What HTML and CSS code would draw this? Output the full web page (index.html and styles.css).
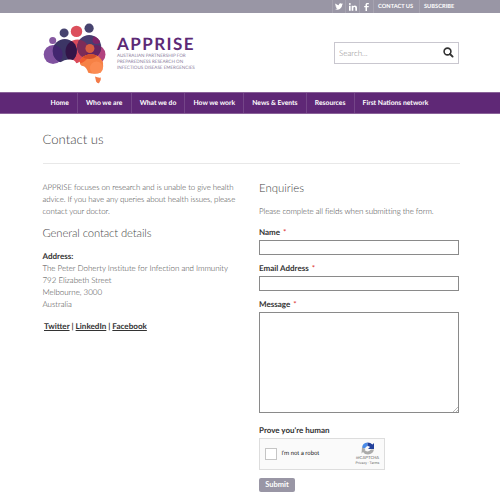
FILE: index.html
```html
<!DOCTYPE html>
<html lang="en">
<head>
<meta charset="utf-8">
<title>Contact us</title>
<link rel="stylesheet" href="styles.css">
</head>
<body>
<div class="topbar">
  <div class="container topbar-inner">
    <a class="social"><svg width="8" height="7" viewBox="0 0 24 20"><path fill="#fff" d="M24 2.400a10 10 0 0 1-2.800.8A5 5 0 0 0 23.300.5a10 10 0 0 1-3.100 1.200A4.900 4.900 0 0 0 11.800 6.200 14 14 0 0 1 1.700 1a4.900 4.900 0 0 0 1.500 6.600A5 5 0 0 1 1 7a4.900 4.900 0 0 0 3.900 4.800 5 5 0 0 1-2.200.1 4.900 4.900 0 0 0 4.600 3.400A10 10 0 0 1 0 17.400 14 14 0 0 0 21.500 4.900 10 10 0 0 0 24 2.400z"/></svg></a>
    <a class="social"><svg width="8" height="8" viewBox="0 0 24 24"><path fill="#fff" d="M0 8h5v15H0zM8 8h4.800v2c2.600-4 11.200-3.500 11.200 4.500V23h-5v-7.500c0-5-6-4.500-6 0V23H8z"/><circle cx="2.500" cy="3" r="2.900" fill="#fff"/></svg></a>
    <a class="social"><svg width="5" height="8" viewBox="0 0 14 24"><path fill="#fff" d="M4 24V13H0V9h4V6c0-4 2.500-6 6-6h4v4h-3c-2 0-2.500 1-2.500 2.500V9H14l-.7 4H8.500v11z"/></svg></a>
    <a class="toplink">CONTACT US</a>
    <a class="toplink last">SUBSCRIBE</a>
  </div>
</div>
<header class="container header">
  <div class="logo">
    <svg width="64" height="62" viewBox="42.500 22 64 62">
      <defs>
        <clipPath id="land"><path d="M42 34H106V60Q103 62 102.500 64Q103.500 69 100 72.800Q94 74.500 87.800 72.800Q86 67 82.500 66Q79 66 79.500 61.500L76 63.500Q73.500 59 69 59.300Q63.500 59.500 59.500 62.500Q55 64.500 50 64Q42 62 42 54z"/></clipPath>
        <clipPath id="violet"><circle cx="52.700" cy="54.500" r="9.500"/></clipPath>
        <clipPath id="navy"><circle cx="64.300" cy="51" r="12"/></clipPath>
        <clipPath id="red"><circle cx="77" cy="51.500" r="12"/></clipPath>
        <clipPath id="slate"><circle cx="88.700" cy="47" r="12"/></clipPath>
      </defs>
      <circle cx="52.200" cy="40.600" r="3.500" fill="#8659a1"/>
      <circle cx="63.600" cy="32.900" r="4.500" fill="#46436f"/>
      <circle cx="76" cy="31.400" r="5.700" fill="#dc4f5c"/>
      <circle cx="88.600" cy="28.200" r="4.600" fill="#46436f"/>
      <g clip-path="url(#land)">
        <circle cx="52.700" cy="54.500" r="9.500" fill="#8052a0"/>
        <circle cx="95.500" cy="54.500" r="9.500" fill="#b2437f"/>
        <circle cx="77" cy="51.500" r="12" fill="#d94a5b"/>
        <circle cx="64.300" cy="51" r="12" fill="#3c3565"/>
        <circle cx="88.700" cy="47" r="12" fill="#483d70"/>
        <circle cx="64.300" cy="51" r="12" fill="#432670" clip-path="url(#violet)"/>
        <circle cx="77" cy="51.500" r="12" fill="#331448" clip-path="url(#navy)"/>
        <circle cx="77" cy="51.500" r="12" fill="#7c2c58" clip-path="url(#slate)"/>
        <circle cx="95.500" cy="54.500" r="9.500" fill="#662563" clip-path="url(#slate)"/>
        <circle cx="96" cy="40" r="4" fill="#7e2468" clip-path="url(#slate)"/>
        <circle cx="90.500" cy="67" r="12.800" fill="#f68145"/>
        <circle cx="90.500" cy="67" r="12.800" fill="#f15b2e" clip-path="url(#red)"/>
        <circle cx="90.500" cy="67" r="12.800" fill="#d44e2b" clip-path="url(#slate)"/>
        <circle cx="96" cy="68" r="6.500" fill="#ff925b" opacity=".6"/>
        <circle cx="89.400" cy="48.500" r="4.500" fill="#d65e42"/>
      </g>
      <path d="M94.500 76.600Q97.500 78 100.300 77.600Q101 80.500 98.500 83.200Q96.500 83.500 95.600 81.500z" fill="#f37b49"/>
    </svg>
    <div class="logo-text">
      <div class="brand">APPRISE</div>
      <div class="tagline">AUSTRALIAN PARTNERSHIP FOR<br>PREPAREDNESS RESEARCH ON<br>INFECTIOUS DISEASE EMERGENCIES</div>
    </div>
  </div>
  <div class="search"><span>Search...</span>
    <svg width="11" height="11" viewBox="0 0 11 11"><circle cx="4.500" cy="4.500" r="3.400" fill="none" stroke="#333" stroke-width="1.600"/><path d="M7 7L9.600 9.600" stroke="#333" stroke-width="1.900" stroke-linecap="round"/></svg>
  </div>
</header>
<nav class="nav"><div class="container nav-inner">
  <a>Home</a><a>Who we are</a><a>What we do</a><a>How we work</a><a>News &amp; Events</a><a>Resources</a><a>First Nations network</a>
</div></nav>
<main class="container">
  <h1>Contact us</h1>
  <div class="columns">
    <section>
      <p class="intro">APPRISE focuses on research and is unable to give health<br>advice. If you have any queries about health issues, please<br>contact your doctor.</p>
      <h2 class="details">General contact details</h2>
      <p class="address"><b>Address:</b><br>The Peter Doherty Institute for Infection and Immunity<br>792 Elizabeth Street<br>Melbourne, 3000<br>Australia</p>
      <p class="links"><a>Twitter</a> | <a>LinkedIn</a> | <a>Facebook</a></p>
    </section>
    <section>
      <h2>Enquiries</h2>
      <p class="note">Please complete all fields when submitting the form.</p>
      <label>Name <i>*</i></label>
      <div class="field"></div>
      <label>Email Address <i>*</i></label>
      <div class="field"></div>
      <label>Message <i>*</i></label>
      <div class="field area"><svg width="5" height="5" viewBox="0 0 5 5"><path d="M0 5L5 0M3 5L5 3" stroke="#888" stroke-width=".6"/></svg></div>
      <label class="prove">Prove you're human</label>
      <div class="captcha">
        <div class="box"></div>
        <span class="robot">I'm not a robot</span>
        <div class="badge">
          <svg width="14" height="13" viewBox="0 0 28 26"><path d="M2 12A12 12 0 0 1 13 1V8Q9 9 8 13z" fill="#4a8be8"/><path d="M13 1Q19 1 23 5L26 2V14H14L18 10Q16 8 13 8z" fill="#23419c"/><path d="M2 10L9 15L7 16Q13 22 20 15H26Q24 24 14 25Q7 25 4 20L1 23z" fill="#ababab"/></svg>
          <div class="re">reCAPTCHA</div>
          <div class="terms">Privacy - Terms</div>
        </div>
      </div>
      <button class="submit">Submit</button>
    </section>
  </div>
</main>
</body>
</html>
```
FILE: styles.css
```css
* { box-sizing: border-box; }
body { margin: 0; background: #fff; color: #444; font: 300 8px/12px Lato, sans-serif; height: 500px; overflow: hidden; text-rendering: geometricPrecision; }
svg { display: block; flex: none; }
.container { width: 417px; margin-left: 42.500px; }
.topbar { height: 13px; background: #9996a5; }
.topbar-inner { display: flex; justify-content: flex-end; height: 13px; color: #fff; font-size: 5.700px; font-weight: 700; }
.social { width: 13.600px; border-left: 1px solid #a6a3b0; display: flex; align-items: center; justify-content: center; }
.toplink { border-left: 1px solid #a6a3b0; padding: 0 4.500px; line-height: 13.500px; width: 46px; white-space: nowrap; }
.toplink.last { width: 41px; }
.header { height: 79px; display: flex; justify-content: space-between; }
.logo { display: flex; padding-top: 9px; }
.logo-text { padding: 13px 0 0 10.500px; white-space: nowrap; }
.brand { color: #5d2a76; font-size: 17px; line-height: 17px; font-weight: 700; letter-spacing: 1.450px; }
.tagline { color: #8b7d9c; font-size: 4.550px; line-height: 6px; font-weight: 400; margin-top: 1px; }
.search { width: 125px; height: 22px; margin-top: 29px; border: 1px solid #c9c7cf; display: flex; align-items: center; justify-content: space-between; padding: 0 4px; color: #888; position: relative; left: -.5px; }
.search svg { margin-top: -2px; }
.nav { height: 21.500px; background: #5f2876; border-top: 1px solid #8a6299; border-bottom: 1px solid #8a6299; }
.nav-inner { display: flex; height: 19.500px; }
.nav a { padding: 0 8.100px; color: #fff; font-size: 6.780px; line-height: 20px; font-weight: 700; border-right: 1px solid #744588; white-space: nowrap; }
.nav a:last-child { border-right: 0; }
h1, h2, p { margin: 0; font-weight: 300; }
h1 { font-size: 13.100px; line-height: 18px; height: 50.500px; padding-top: 16.500px; border-bottom: 1px solid #e8e8e8; }
h2 { font-size: 11.400px; line-height: 16px; }
.columns { display: grid; grid-template-columns: 200px 200px; column-gap: 16.500px; padding-top: 16.500px; white-space: nowrap; }
.intro { font-size: 7.900px; letter-spacing: -.065px; }
.address { letter-spacing: -.05px; }
.address b { letter-spacing: 0; }
.details { margin: 9px 0 8.500px; font-size: 11.250px; letter-spacing: -.1px; }
b, label, .links { font-weight: 700; color: #333; }
.links { margin-top: 9.500px; padding-left: 1.500px; font-size: 8.100px; }
.links a { text-decoration: underline; }
.note { margin: 8.500px 0 9px; letter-spacing: -.09px; }
label { display: block; line-height: 12px; }
label i { color: #d33; font-style: normal; margin-left: 1px; font-weight: 400; }
.field { height: 15px; border: 1px solid #8a8a8a; margin: 2px 0 7px; }
.area { height: 101px; margin-bottom: 10.500px; display: flex; justify-content: flex-end; align-items: flex-end; }
.captcha { width: 126px; height: 32px; border: 1px solid #ddd; background: #fafafa; margin-top: 2px; display: flex; align-items: center; padding-left: 5px; }
.box { width: 12px; height: 12px; border: 1px solid #c5c5c5; background: #fff; }
.robot { font: 400 5.900px/10px Roboto, sans-serif; color: #222; margin-left: 4.500px; }
.badge { margin-left: auto; width: 33px; display: flex; flex-direction: column; align-items: center; font: 400 4.300px/5px Roboto, sans-serif; color: #666; padding-top: 1px; }
.re { margin-top: 1.500px; }
.terms { font-size: 3.500px; line-height: 5px; }
.submit { display: block; width: 36px; height: 14px; margin-top: 8px; border: 0; border-radius: 2px; padding: 0; background: #9996a5; color: #fff; font: 700 7.500px/14px Lato, sans-serif; }
```
